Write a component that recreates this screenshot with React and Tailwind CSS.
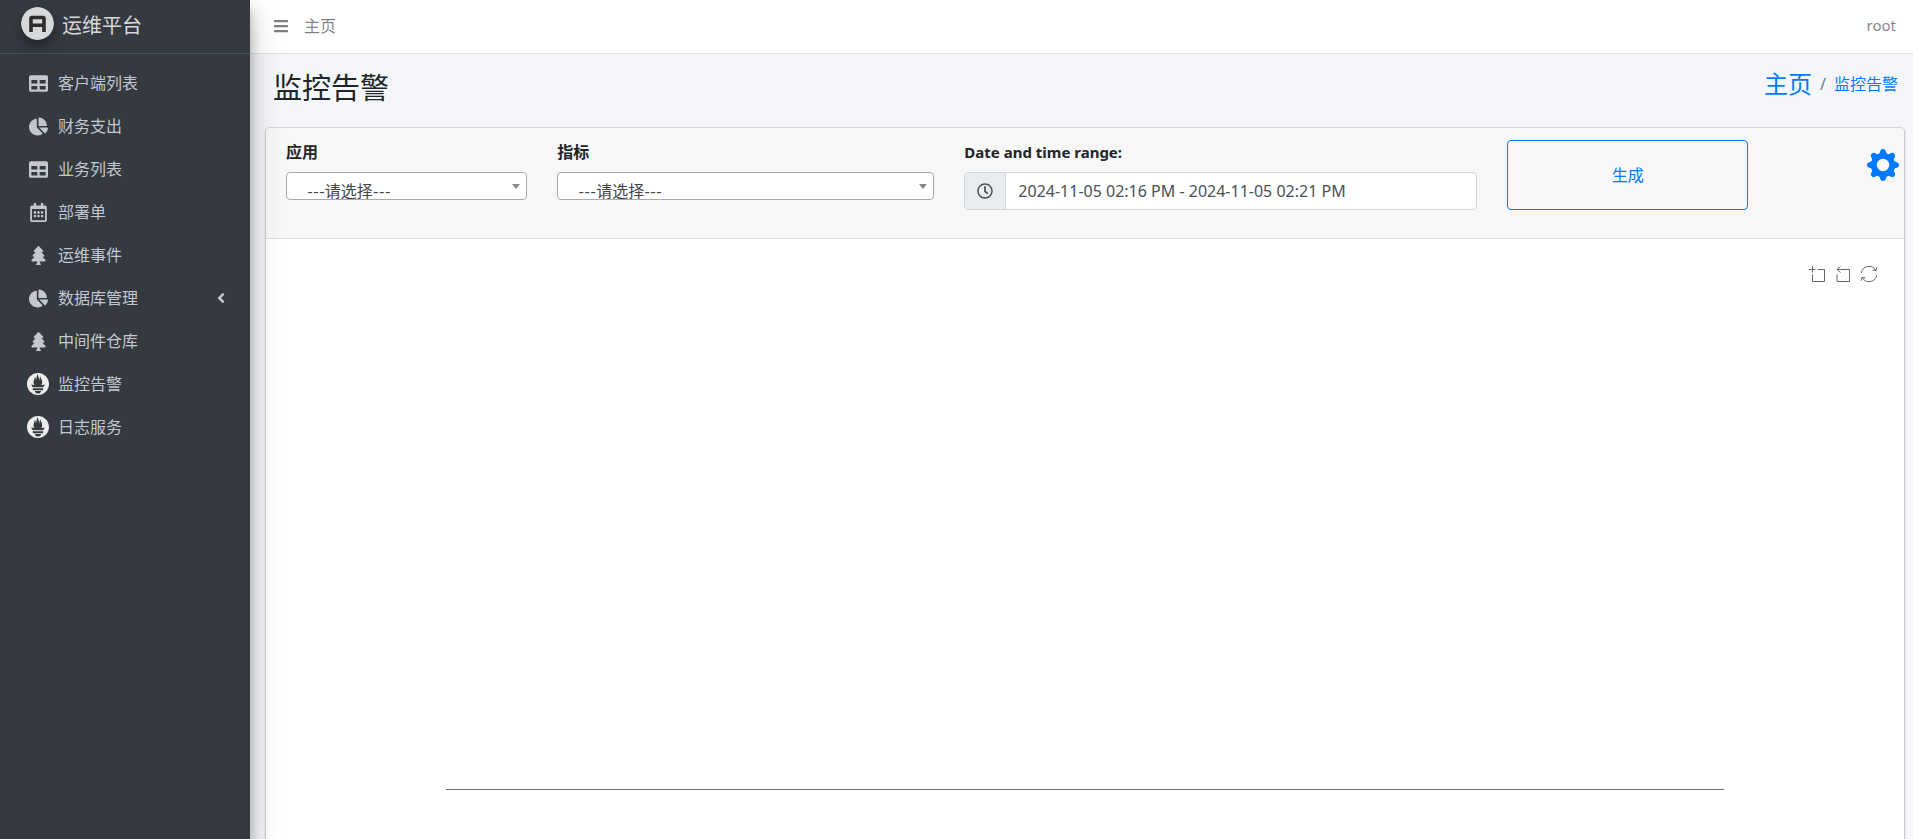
import React from 'react';
import { FaTable, FaChartPie, FaRegCalendarAlt, FaTree, FaAngleLeft, FaBars, FaRegClock } from 'react-icons/fa';
import { SiPrometheus } from 'react-icons/si';

const NAV = [
  { label: '客户端列表', icon: FaTable },
  { label: '财务支出', icon: FaChartPie },
  { label: '业务列表', icon: FaTable },
  { label: '部署单', icon: FaRegCalendarAlt },
  { label: '运维事件', icon: FaTree },
  { label: '数据库管理', icon: FaChartPie, children: true },
  { label: '中间件仓库', icon: FaTree },
  { label: '监控告警', icon: SiPrometheus, badge: true },
  { label: '日志服务', icon: SiPrometheus, badge: true },
];

function Logo() {
  return (
    <svg viewBox="0 0 33 33" className="size-[33px] rounded-full opacity-80 shadow-[0_10px_20px_rgba(0,0,0,0.19),0_6px_6px_rgba(0,0,0,0.23)]" aria-hidden="true">
      <circle cx="16.5" cy="16.5" r="16.5" fill="#fff" />
      <path d="M10 25V11.500a1 1 0 0 1 1-1h11a1 1 0 0 1 1 1V25M10 18.200h13" fill="none" stroke="#2b2b2b" strokeWidth="3.6" />
    </svg>
  );
}

function Gear() {
  const teeth = [0, 45, 90, 135, 180, 225, 270, 315];
  return (
    <svg viewBox="0 0 32 32" className="size-8" aria-hidden="true">
      <g fill="currentColor">
        <path fillRule="evenodd" d="M16 3.900a12.100 12.100 0 1 0 0 24.200 12.100 12.100 0 0 0 0-24.200ZM16 9.800a6.200 6.200 0 1 1 0 12.400 6.200 6.200 0 0 1 0-12.400Z" />
        {teeth.map((a) => (
          <path key={a} transform={`rotate(${a} 16 16)`} d="M11 5.600C12.600 4.800 12.900 3.200 13.200 2.200C13.700.7 14.700 0 16 0s2.300.7 2.800 2.200C19.100 3.200 19.400 4.800 21 5.600L19 8H13Z" />
        ))}
      </g>
    </svg>
  );
}

function Sidebar() {
  return (
    <aside className="relative z-10 h-screen w-[250px] shrink-0 bg-[#343a40] shadow-[0_14px_28px_rgba(0,0,0,0.25),0_10px_10px_rgba(0,0,0,0.22)]">
      <a href="#" className="flex h-[54px] items-center gap-2 border-b border-[#4b545c] pb-[6px] pl-[21px] text-xl text-white/80">
        <Logo />
        <span className="pt-1">运维平台</span>
      </a>
      <nav className="flex flex-col gap-[3px] px-2 pt-[9px]">
        {NAV.map(({ label, icon: Icon, children, badge }) => (
          <a key={label} href="#" className="flex h-10 items-center gap-[7px] px-[17px] text-[#c2c7d0]">
            <span className="flex w-[26px] justify-center">
              {badge ? <Icon className="size-[22px] text-[#eeeeee]" /> : <Icon className="size-[19px]" />}
            </span>
            <span>{label}</span>
            {children && <FaAngleLeft className="-mr-1 ml-auto size-4" />}
          </a>
        ))}
      </nav>
    </aside>
  );
}

function Select({ id, label }) {
  return (
    <div>
      <label htmlFor={id} className="mb-2 block font-bold">{label}</label>
      <div className="relative">
        <select id={id} className="block h-7 w-full appearance-none overflow-hidden rounded border border-[#aaa] bg-white pt-[6px] pl-5 font-['Lato','Noto_Sans_CJK_SC',sans-serif] leading-6 text-[#444]">
          <option>---请选择---</option>
        </select>
        <svg viewBox="0 0 8 5" className="pointer-events-none absolute top-3 right-[7px] h-[5px] w-2" aria-hidden="true">
          <path d="M0 0h8L4 5Z" fill="#888" />
        </svg>
      </div>
    </div>
  );
}

const TOOLS = [
  {
    name: '区域缩放',
    d: 'M0 3.500H6.500M3.500 0V6.500M8.500 3.500H15.500V15.500H3.500V8.500',
  },
  {
    name: '区域缩放还原',
    d: 'M5.500 .5L2 3.500L5.500 6.500M2 3.500H14.500V15.500H2V8.500',
  },
];

function Chart() {
  return (
    <div className="flex h-[580px] flex-col">
      <div className="flex justify-end gap-[10px] pt-[7px] pr-[7px] text-[#666]">
        {TOOLS.map(({ name, d }) => (
          <button key={name} type="button" aria-label={name}>
            <svg viewBox="0 0 16 16" className="size-4" fill="none" stroke="currentColor" aria-hidden="true">
              <path d={d} />
            </svg>
          </button>
        ))}
        <button type="button" aria-label="还原">
          <svg viewBox="0 0 16 16" className="size-4 overflow-visible" fill="none" stroke="currentColor" aria-hidden="true">
            <path d="M.3 7A7.800 7.800 0 0 1 14.800 4.300M15.700 9A7.800 7.800 0 0 1 1.200 11.700M15.800 1.200L15 4.600L11.500 4.100M.2 14.800L1 11.400L4.500 11.900" />
          </svg>
        </button>
      </div>
      <div className="mx-[10%] mt-[507px] border-t border-[#6e7079]" />
    </div>
  );
}

export default function App() {
  return (
    <div className="flex h-screen overflow-hidden bg-[#f4f6f9] font-['Noto_Sans','Noto_Sans_CJK_SC',sans-serif] text-base text-[#212529]">
      <Sidebar />
      <div className="flex min-w-0 flex-1 flex-col overflow-hidden">
        <header className="flex h-[54px] shrink-0 items-center border-b border-[#dee2e6] bg-white pr-[17px] pb-[2px] pl-[15px] text-black/50">
          <button type="button" aria-label="菜单" className="mx-2">
            <FaBars className="size-4" />
          </button>
          <a href="#" className="ml-[7px]">主页</a>
          <a href="#" className="ml-auto text-[15px]">root</a>
        </header>
        <main className="pr-[9px] pl-4">
          <div className="flex h-[74px] items-start justify-between pr-[6px] pl-[7px]">
            <h1 className="pt-4 text-[29px] leading-9">监控告警</h1>
            <nav className="flex items-center gap-2 pt-[14px] text-[#007bff]">
              <a href="#" className="text-2xl">主页</a>
              <span className="text-[#6c757d]">/</span>
              <a href="#">监控告警</a>
            </nav>
          </div>
          <section className="rounded bg-white shadow-[0_0_1px_1px_rgba(0,0,0,0.125),0_1px_3px_rgba(0,0,0,0.2)]">
            <form className="grid h-[111px] grid-cols-12 items-start rounded-t border-b border-black/12 bg-[#f7f7f7] px-[5px] pt-3">
              <div className="col-span-2 px-[15px]">
                <Select id="app" label="应用" />
              </div>
              <div className="col-span-3 px-[15px]">
                <Select id="metric" label="指标" />
              </div>
              <div className="col-span-4 px-[15px]">
                <label htmlFor="range" className="mb-2 block text-[15px] leading-6 font-bold">Date and time range:</label>
                <div className="flex h-[38px] overflow-hidden rounded border border-[#ced4da] bg-white">
                  <span className="flex w-[41px] items-center justify-center border-r border-[#ced4da] bg-[#e9ecef] text-[#495057]">
                    <FaRegClock className="size-4" />
                  </span>
                  <input id="range" type="text" defaultValue="2024-11-05 02:16 PM - 2024-11-05 02:21 PM" className="min-w-0 flex-1 px-3 text-base text-[#495057]" />
                </div>
              </div>
              <div className="col-span-2 px-[15px]">
                <button type="button" className="h-[70px] w-full rounded border border-[#007bff] text-[#007bff]">生成</button>
              </div>
              <div className="flex justify-end pt-[9px]">
                <button type="button" aria-label="设置" className="text-[#007bff]">
                  <Gear />
                </button>
              </div>
            </form>
            <div className="p-5">
              <Chart />
            </div>
          </section>
        </main>
      </div>
    </div>
  );
}
